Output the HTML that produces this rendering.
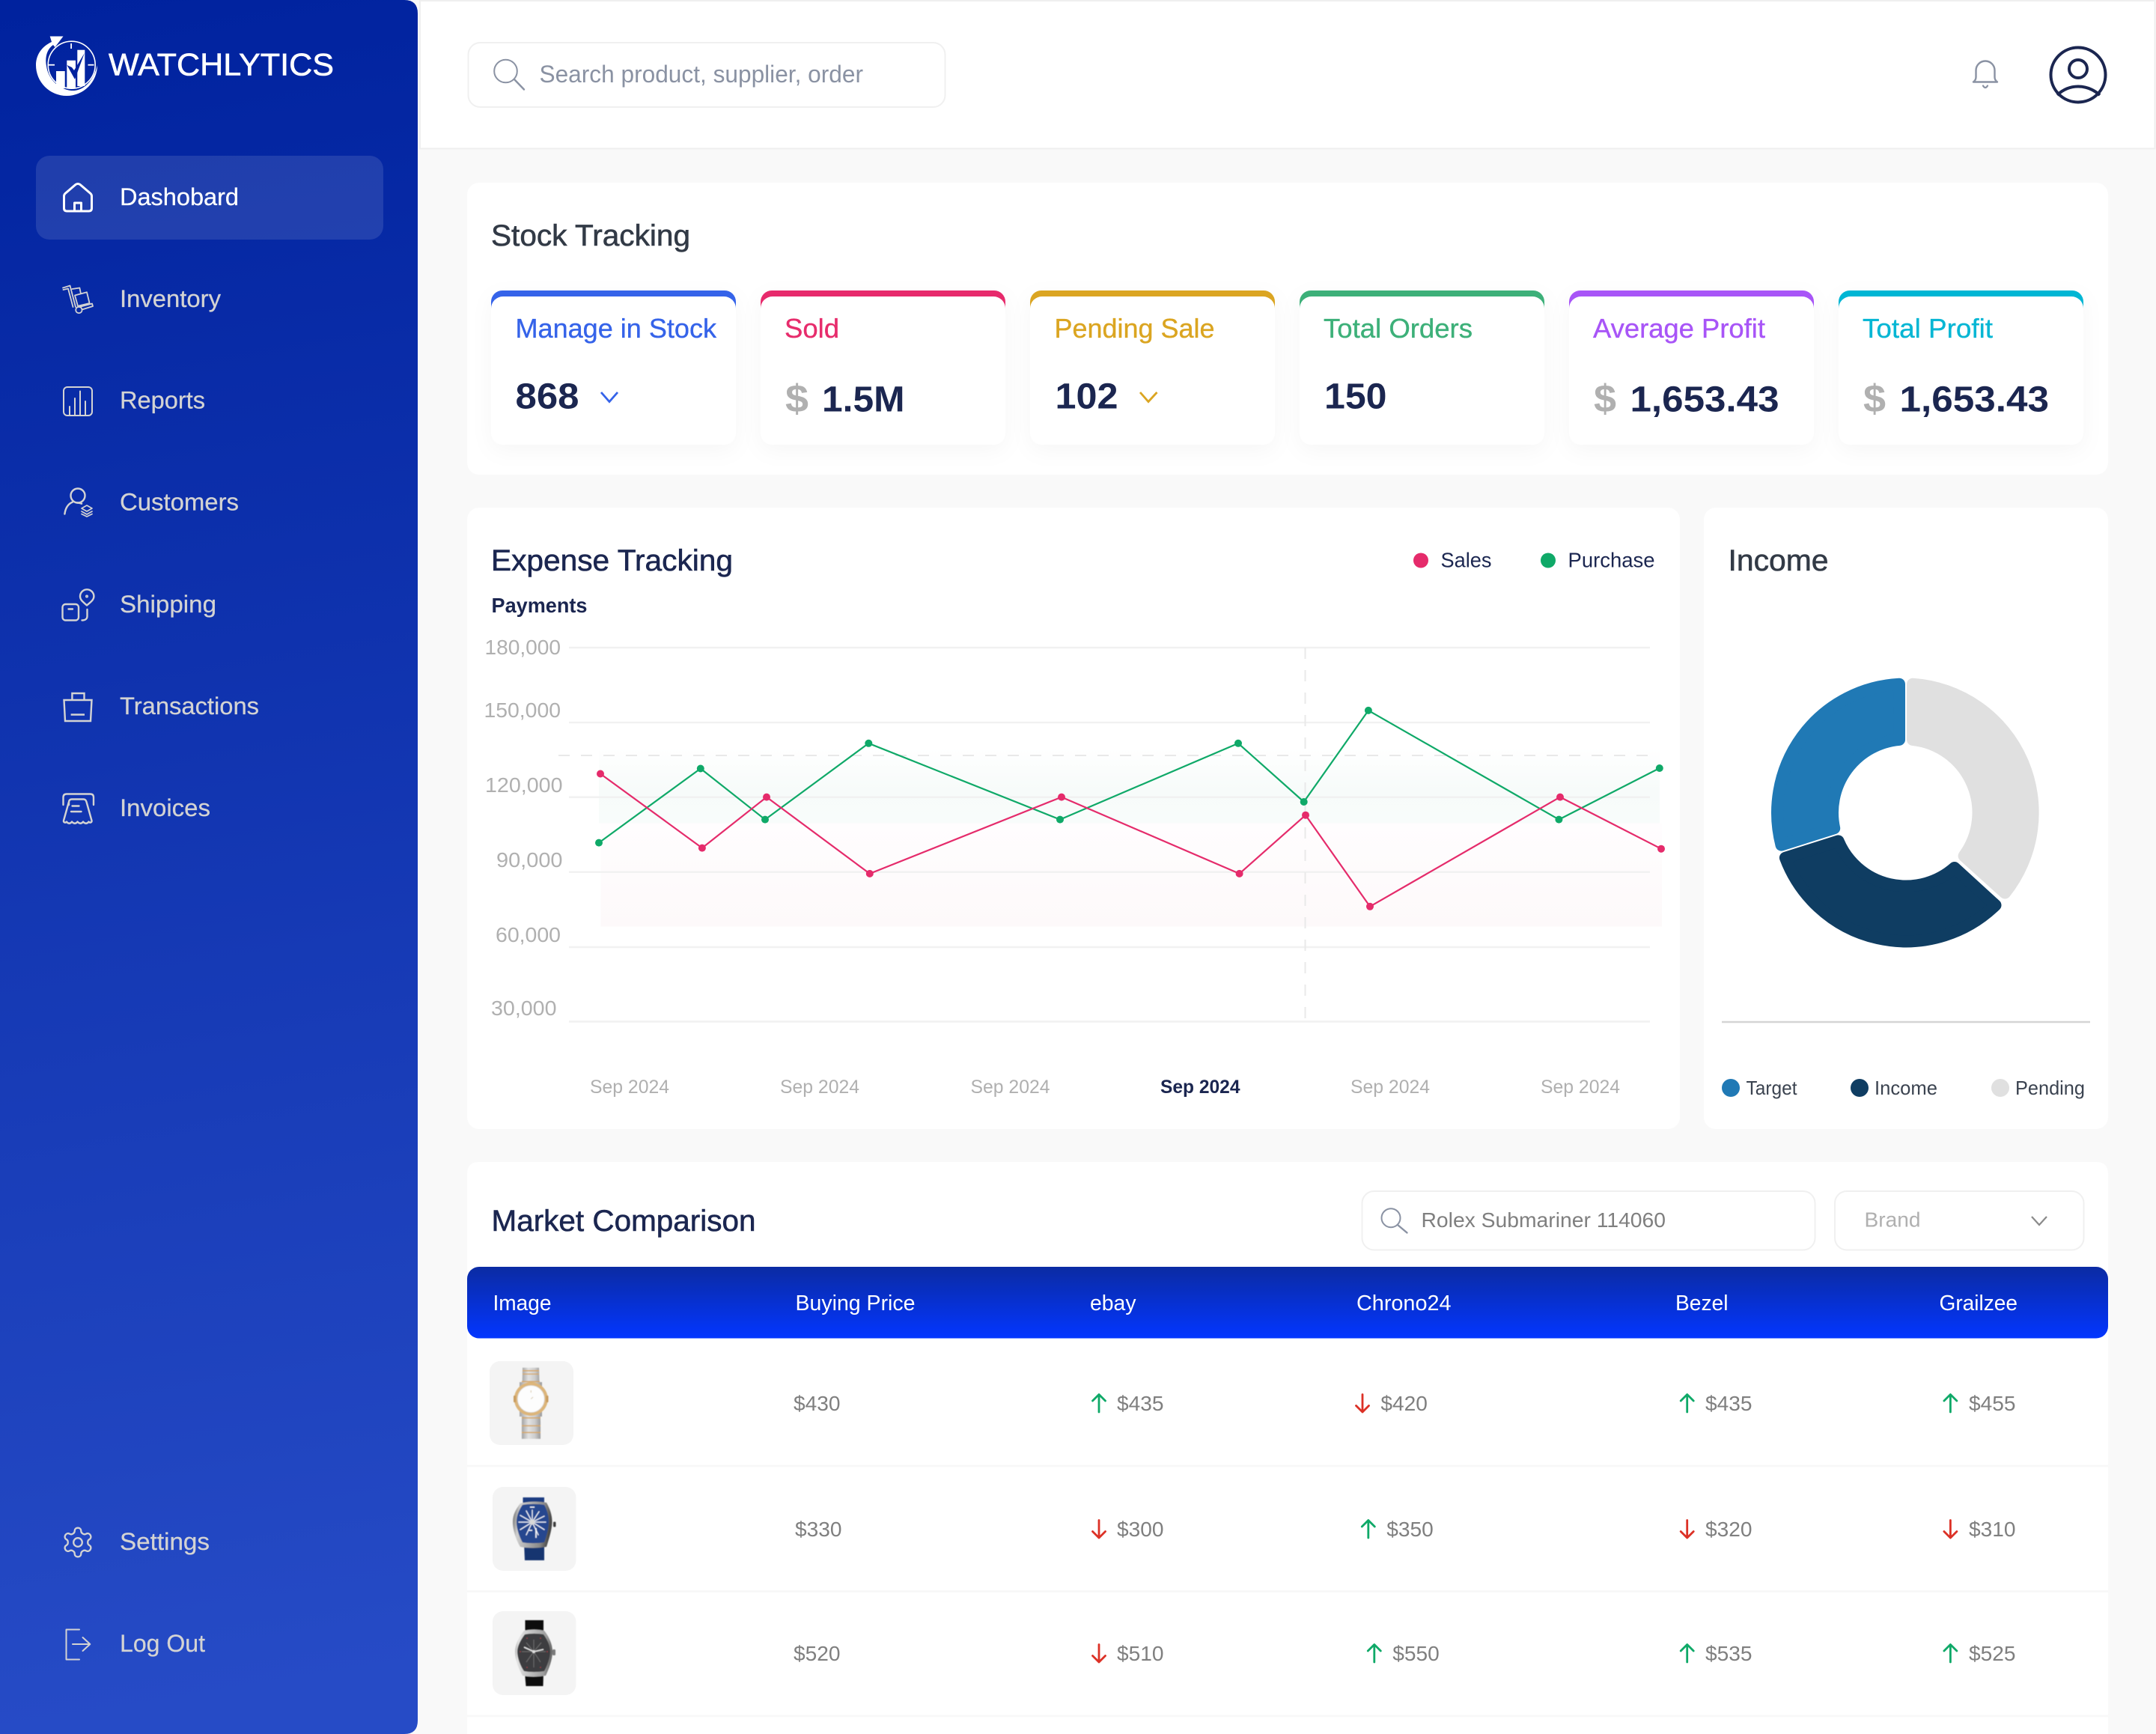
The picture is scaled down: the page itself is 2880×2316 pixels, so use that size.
<!DOCTYPE html>
<html lang="en">
<head>
<meta charset="utf-8">
<title>Watchlytics Dashboard</title>
<style>
html,body{margin:0;padding:0;background:#f9f9f9;width:2880px;height:2316px;overflow:hidden}
svg{display:block}
text{font-family:"Liberation Sans",sans-serif;white-space:pre}
.m{fill:currentColor;stroke:currentColor;stroke-width:.6}
.b{font-weight:700}
.nav{font-size:32px;fill:#d3d3d3;stroke:#d3d3d3;stroke-width:.25}
.ic{fill:none;stroke:#d3d3d3;stroke-width:2.4;stroke-linecap:round;stroke-linejoin:round}
.lab{font-size:36px;stroke-width:.35}
.num{font-size:48px;font-weight:700;fill:#1b2650}
.dol{font-size:52px;font-weight:700;fill:#b0b0b0}
.yl{font-size:28px;fill:#b0b0b0}
.xl{font-size:25px;fill:#b0b0b0}
.th{font-size:29px;fill:#fff}
.td{font-size:28px;fill:#7f7f7f}
.leg{font-size:26px;fill:#3b4350}
.up{fill:none;stroke:#0fa968;stroke-width:2.8;stroke-linecap:round;stroke-linejoin:round}
.dn{fill:none;stroke:#dc3126;stroke-width:2.8;stroke-linecap:round;stroke-linejoin:round}
.grid{stroke:#f1f1f1;stroke-width:2.4}
</style>
</head>
<body>
<svg xmlns="http://www.w3.org/2000/svg" width="2880" height="2316" viewBox="0 0 2880 2316">
<defs>
<linearGradient id="side" x1="0" y1="0" x2="0.04" y2="1"><stop offset="0" stop-color="#00229e"/><stop offset="1" stop-color="#264bc6"/></linearGradient>
<linearGradient id="head" x1="0" y1="0" x2="0" y2="1"><stop offset="0" stop-color="#0b2ba3"/><stop offset="1" stop-color="#0336ff"/></linearGradient>
<linearGradient id="gA" x1="0" y1="0" x2="0" y2="1"><stop offset="0" stop-color="#f6fbf9" stop-opacity="0"/><stop offset=".55" stop-color="#f7fbfa"/><stop offset="1" stop-color="#f8fcfb"/></linearGradient>
<linearGradient id="pA" x1="0" y1="0" x2="0" y2="1"><stop offset="0" stop-color="#fffdfe"/><stop offset="1" stop-color="#fdf9fa"/></linearGradient>
<linearGradient id="steel" x1="0" y1="0" x2="1" y2="0"><stop offset="0" stop-color="#a3a3a3"/><stop offset=".35" stop-color="#e2e2e2"/><stop offset=".7" stop-color="#cdcdcd"/><stop offset="1" stop-color="#9a9a9a"/></linearGradient>
<linearGradient id="steel2" x1="0" y1="0" x2="1" y2="0.15"><stop offset="0" stop-color="#5d5d5d"/><stop offset=".2" stop-color="#cfcfcf"/><stop offset=".8" stop-color="#8a8a8a"/><stop offset="1" stop-color="#4a4a4a"/></linearGradient>
<linearGradient id="steel3" x1="0" y1="0" x2="1" y2="0.1"><stop offset="0" stop-color="#9a9a9a"/><stop offset=".12" stop-color="#e2e2e2"/><stop offset=".85" stop-color="#9c9c9c"/><stop offset="1" stop-color="#6a6a6a"/></linearGradient>
<filter id="sh" x="-20%" y="-20%" width="140%" height="150%"><feDropShadow dx="0" dy="8" stdDeviation="14" flood-color="#000" flood-opacity=".035"/></filter>
<filter id="soft" x="-5%" y="-5%" width="110%" height="110%"><feGaussianBlur stdDeviation=".6"/></filter>
</defs>

<rect width="2880" height="2316" fill="#f9f9f9"/>

<!-- Sidebar -->
<path d="M0 0H540Q558 0 558 18V2298Q558 2316 540 2316H0Z" fill="url(#side)"/>
<!-- Logo -->
<g fill="#fff">
<path d="M130 87A41 41 0 0 1 89 128A41 41 0 0 1 48 87C48 73 56 62 69 56L66.7 48.5H84.5L73.5 63L71 60C62 66 60 78 62 88C64 105 78 119 95 121C112 122 125 108 130 87Z"/>
<rect x="75" y="95" width="11.7" height="23"/>
<rect x="89.3" y="80.7" width="11.7" height="37.6"/>
<rect x="103.3" y="66.7" width="10" height="48.3"/>
<rect x="94.2" y="58" width="1.8" height="7"/>
<rect x="65" y="85.8" width="8" height="1.8"/>
<rect x="117.5" y="85.8" width="8" height="1.8"/>
</g>
<circle cx="95.7" cy="86.7" r="31.5" fill="none" stroke="#fff" stroke-width="1.6"/>
<polygon points="89.5,87 96,90 99,94 112.8,71 100,106" fill="#00229e"/>
<text x="145" y="100.5" font-size="42" fill="#fff" stroke="#fff" stroke-width=".6" textLength="301" lengthAdjust="spacingAndGlyphs">WATCHLYTICS</text>

<rect x="48" y="208" width="464" height="112" rx="18" fill="#fff" fill-opacity=".115"/>
<path d="M85.5 262Q85.5 260 87 258.5L101 246.5Q104 244.5 107 246.5L121 258.5Q122.5 260 122.5 262V278Q122.5 282 118.5 282H89.5Q85.5 282 85.5 278ZM99.5 282V271H108.5V282" fill="none" stroke="#fff" stroke-width="3" stroke-linejoin="round"/>
<text x="160" y="274" font-size="32" fill="#fff" stroke="#fff" stroke-width=".25" textLength="159" lengthAdjust="spacingAndGlyphs">Dashobard</text>

<!-- Inventory -->
<g class="ic" style="stroke-width:1.8">
<path d="M84 384.5L93.5 381.5L101 410M84.5 387L91 385.5L97.5 410"/>
<circle cx="105.4" cy="414" r="4.2"/>
<path d="M96.4 386L106.4 384.5L107.8 391.5M100 394.5L116 390.3L119.6 405L104 408.7ZM109.6 413.5L124 409L123 405.5L106 410"/>
</g>
<text class="nav" x="160" y="410" textLength="135" lengthAdjust="spacingAndGlyphs">Inventory</text>

<!-- Reports -->
<g class="ic" style="stroke-width:2">
<rect x="85" y="517" width="38" height="38" rx="5"/>
<path d="M93 555V543M100 555V532M107 555V522.5M114 555V536"/>
</g>
<text class="nav" x="160" y="545.5" textLength="114" lengthAdjust="spacingAndGlyphs">Reports</text>

<!-- Customers -->
<g class="ic">
<circle cx="104" cy="662" r="9.5"/>
<path d="M86.4 686.5C87.5 678 91 673 97 670.5M103 671.5C105.5 671.7 107.5 672 109 672.7"/>
<path style="stroke-width:1.7" d="M116 675L123 679L116 683L109 679ZM109 683L116 687L123 683M109 686.5L116 690L123 686.5"/>
</g>
<text class="nav" x="160" y="681.5" textLength="159" lengthAdjust="spacingAndGlyphs">Customers</text>

<!-- Shipping -->
<g class="ic">
<rect x="83.5" y="807" width="21.5" height="21.5" rx="4"/>
<path d="M91.5 813.5H97"/>
<path d="M116 808.5C111.5 804.5 107 801.5 107 796.5A9.2 9.2 0 0 1 125.4 796.5C125.4 801.5 120.5 804.5 116 808.5Z"/>
<circle cx="116" cy="796.5" r=".8"/>
<path d="M116.5 814V823C116.5 826.5 114 828.5 109.5 828.5"/>
</g>
<text class="nav" x="160" y="818" textLength="129" lengthAdjust="spacingAndGlyphs">Shipping</text>

<!-- Transactions -->
<g class="ic" style="stroke-linejoin:miter;stroke-linecap:butt">
<path d="M96.4 936V926H112.5V936"/>
<path d="M85.5 935H122.5L121 963H87ZM94.6 954.5H113"/>
</g>
<text class="nav" x="160" y="954" textLength="186" lengthAdjust="spacingAndGlyphs">Transactions</text>

<!-- Invoices -->
<g class="ic">
<path d="M84.5 1075V1065Q84.5 1060.5 89 1060.5H120.5Q125 1060.5 125 1065V1075"/>
<path d="M92 1075V1071Q92.5 1067.5 96 1067.5H111.5Q114.5 1067.5 115.5 1071L122.5 1096C123 1098.5 120 1099.5 118.5 1097.5C116.5 1100.5 113.5 1100.5 111 1097.5C109 1100.5 106 1100.5 103.5 1097.5C101.5 1100.5 98.5 1100.5 96 1097.5C94 1100.5 91 1100.5 89 1097.5C87.5 1099.5 84.5 1098.5 85 1096L92 1071"/>
<path d="M96.5 1076.5H105.5M95 1084H108.5"/>
</g>
<text class="nav" x="160" y="1090" textLength="121" lengthAdjust="spacingAndGlyphs">Invoices</text>

<!-- Settings -->
<g transform="translate(104 2060) scale(1.93) translate(-12 -12)" fill="none" stroke="#d3d3d3" stroke-width="1.2" stroke-linecap="round" stroke-linejoin="round">
<path d="M12.22 2h-.44a2 2 0 0 0-2 2v.18a2 2 0 0 1-1 1.73l-.43.25a2 2 0 0 1-2 0l-.15-.08a2 2 0 0 0-2.73.73l-.22.38a2 2 0 0 0 .73 2.73l.15.1a2 2 0 0 1 1 1.72v.51a2 2 0 0 1-1 1.74l-.15.09a2 2 0 0 0-.73 2.73l.22.38a2 2 0 0 0 2.73.73l.15-.08a2 2 0 0 1 2 0l.43.25a2 2 0 0 1 1 1.73V20a2 2 0 0 0 2 2h.44a2 2 0 0 0 2-2v-.18a2 2 0 0 1 1-1.73l.43-.25a2 2 0 0 1 2 0l.15.08a2 2 0 0 0 2.73-.73l.22-.39a2 2 0 0 0-.73-2.73l-.15-.08a2 2 0 0 1-1-1.74v-.5a2 2 0 0 1 1-1.74l.15-.09a2 2 0 0 0 .73-2.73l-.22-.38a2 2 0 0 0-2.73-.73l-.15.08a2 2 0 0 1-2 0l-.43-.25a2 2 0 0 1-1-1.73V4a2 2 0 0 0-2-2z"/>
<circle cx="12" cy="12" r="3"/>
</g>
<text class="nav" x="160" y="2070" textLength="120" lengthAdjust="spacingAndGlyphs">Settings</text>

<!-- Log Out -->
<g class="ic" style="stroke-width:2">
<path d="M106 2176.5H88.5V2216.5H106"/>
<path d="M97 2196H120M110.5 2187L120.3 2196L110.5 2205"/>
</g>
<text class="nav" x="160" y="2206" textLength="114" lengthAdjust="spacingAndGlyphs">Log Out</text>

<!-- Top bar -->
<rect x="561" y="1" width="2317.5" height="197.5" fill="#fff" stroke="#efefef" stroke-width="2"/>
<rect x="625.5" y="57" width="637" height="86" rx="16" fill="#fff" stroke="#f0f0f0" stroke-width="2"/>
<circle cx="675.5" cy="95" r="15.3" fill="none" stroke="#8a92a3" stroke-width="2"/>
<path d="M687 106L700 119.5" stroke="#8a92a3" stroke-width="2.4" stroke-linecap="round"/>
<text x="720.5" y="110" font-size="32" fill="#8a92a3" textLength="432.5" lengthAdjust="spacingAndGlyphs">Search product, supplier, order</text>
<path d="M2636 109.5H2668Q2664.5 107 2664.5 103V94A12.5 12.5 0 0 0 2639.5 94V103Q2639.5 107 2636 109.5Z" fill="none" stroke="#8a92a3" stroke-width="2.4" stroke-linejoin="round"/>
<path d="M2649 114.5Q2652 119.5 2655 114.5" fill="none" stroke="#8a92a3" stroke-width="2.2" stroke-linecap="round"/>
<g fill="none" stroke="#1b2650" stroke-width="4">
<circle cx="2776" cy="100" r="36.5"/>
<circle cx="2776" cy="92" r="12"/>
<path d="M2748 127Q2760 115.5 2776 115.5Q2792 115.5 2805 127"/>
</g>

<!-- Stock Tracking card -->
<rect x="624" y="244" width="2192" height="390" rx="16" fill="#fff"/>
<text class="m" style="color:#323a46" x="656" y="328" font-size="40" textLength="266" lengthAdjust="spacingAndGlyphs">Stock Tracking</text>

<g filter="url(#sh)">
<rect x="656" y="388" width="327" height="60" rx="15" fill="#3563e9"/>
<rect x="656" y="396" width="327" height="198" rx="16" fill="#fff"/>
</g>
<g filter="url(#sh)">
<rect x="1016" y="388" width="327" height="60" rx="15" fill="#e72c6c"/>
<rect x="1016" y="396" width="327" height="198" rx="16" fill="#fff"/>
</g>
<g filter="url(#sh)">
<rect x="1376" y="388" width="327" height="60" rx="15" fill="#dba521"/>
<rect x="1376" y="396" width="327" height="198" rx="16" fill="#fff"/>
</g>
<g filter="url(#sh)">
<rect x="1736" y="388" width="327" height="60" rx="15" fill="#3db079"/>
<rect x="1736" y="396" width="327" height="198" rx="16" fill="#fff"/>
</g>
<g filter="url(#sh)">
<rect x="2096" y="388" width="327" height="60" rx="15" fill="#a855f7"/>
<rect x="2096" y="396" width="327" height="198" rx="16" fill="#fff"/>
</g>
<g filter="url(#sh)">
<rect x="2456" y="388" width="327" height="60" rx="15" fill="#06b6d4"/>
<rect x="2456" y="396" width="327" height="198" rx="16" fill="#fff"/>
</g>

<text class="lab" fill="#3563e9" stroke="#3563e9" x="688.5" y="451" textLength="268.5" lengthAdjust="spacingAndGlyphs">Manage in Stock</text>
<text class="lab" fill="#e72c6c" stroke="#e72c6c" x="1048" y="451" textLength="73" lengthAdjust="spacingAndGlyphs">Sold</text>
<text class="lab" fill="#dba521" stroke="#dba521" x="1408.500" y="451" textLength="214" lengthAdjust="spacingAndGlyphs">Pending Sale</text>
<text class="lab" fill="#3db079" stroke="#3db079" x="1768" y="451" textLength="199" lengthAdjust="spacingAndGlyphs">Total Orders</text>
<text class="lab" fill="#a855f7" stroke="#a855f7" x="2128" y="451" textLength="230" lengthAdjust="spacingAndGlyphs">Average Profit</text>
<text class="lab" fill="#06b6d4" stroke="#06b6d4" x="2488" y="451" textLength="174" lengthAdjust="spacingAndGlyphs">Total Profit</text>

<text class="num" x="688.5" y="545.5" textLength="85" lengthAdjust="spacingAndGlyphs">868</text>
<path d="M803 524L814 536.5L825 524" fill="none" stroke="#3563e9" stroke-width="2.8"/>
<text class="dol" x="1049" y="550" textLength="31" lengthAdjust="spacingAndGlyphs">$</text>
<text class="num" x="1098" y="549.5" textLength="110.5" lengthAdjust="spacingAndGlyphs">1.5M</text>
<text class="num" x="1409.5" y="545.5" textLength="84" lengthAdjust="spacingAndGlyphs">102</text>
<path d="M1523 524L1534 536.5L1545.5 524" fill="none" stroke="#dba521" stroke-width="2.8"/>
<text class="num" x="1769" y="545.5" textLength="83.5" lengthAdjust="spacingAndGlyphs">150</text>
<text class="dol" x="2129" y="550" textLength="30" lengthAdjust="spacingAndGlyphs">$</text>
<text class="num" x="2177.500" y="549.5" textLength="199" lengthAdjust="spacingAndGlyphs">1,653.43</text>
<text class="dol" x="2489" y="550" textLength="30" lengthAdjust="spacingAndGlyphs">$</text>
<text class="num" x="2537.5" y="549.5" textLength="199.5" lengthAdjust="spacingAndGlyphs">1,653.43</text>

<!-- Expense Tracking card -->
<rect x="624" y="678" width="1620" height="830" rx="16" fill="#fff"/>
<text class="m" style="color:#1b2650" x="656" y="762" font-size="40" textLength="323" lengthAdjust="spacingAndGlyphs">Expense Tracking</text>
<text class="b" x="656.5" y="818" font-size="28" fill="#1b2650" textLength="128" lengthAdjust="spacingAndGlyphs">Payments</text>
<circle cx="1898" cy="748.5" r="10" fill="#e52b6b"/>
<text x="1924.5" y="757.5" font-size="28" fill="#1b2650" textLength="68" lengthAdjust="spacingAndGlyphs">Sales</text>
<circle cx="2068" cy="748.5" r="10" fill="#0fa968"/>
<text x="2094.5" y="757.5" font-size="28" fill="#1b2650" textLength="116" lengthAdjust="spacingAndGlyphs">Purchase</text>

<rect x="800" y="1000" width="1417" height="99.5" fill="url(#gA)"/>
<rect x="802.5" y="1099.5" width="1417.5" height="138" fill="url(#pA)"/>

<g class="grid">
<line x1="760" y1="865" x2="2204" y2="865"/>
<line x1="760" y1="965" x2="2204" y2="965"/>
<line x1="760" y1="1064.7" x2="2204" y2="1064.7"/>
<line x1="760" y1="1164.7" x2="2204" y2="1164.7"/>
<line x1="760" y1="1265" x2="2204" y2="1265"/>
<line x1="760" y1="1364.5" x2="2204" y2="1364.5"/>
</g>
<line x1="746" y1="1009" x2="2204" y2="1009" stroke="#e9e9e9" stroke-width="2" stroke-dasharray="15 15"/>
<line x1="1743.5" y1="865" x2="1743.5" y2="1365" stroke="#e9e9e9" stroke-width="2" stroke-dasharray="15 15"/>

<text class="yl" x="647.5" y="874" textLength="101.5" lengthAdjust="spacingAndGlyphs">180,000</text>
<text class="yl" x="646.5" y="958" textLength="102.5" lengthAdjust="spacingAndGlyphs">150,000</text>
<text class="yl" x="648" y="1058" textLength="103.5" lengthAdjust="spacingAndGlyphs">120,000</text>
<text class="yl" x="663" y="1158" textLength="88.5" lengthAdjust="spacingAndGlyphs">90,000</text>
<text class="yl" x="662" y="1258" textLength="87" lengthAdjust="spacingAndGlyphs">60,000</text>
<text class="yl" x="656" y="1356" textLength="87.5" lengthAdjust="spacingAndGlyphs">30,000</text>

<polyline points="800,1125.6 935.8,1026.5 1022,1094.6 1160.3,992.8 1416,1094.6 1654,992.8 1741.7,1071 1827.9,948.9 2082.4,1094.6 2216.8,1026" fill="none" stroke="#0fa968" stroke-width="2.2" stroke-linejoin="round"/>
<polyline points="802,1033.5 937.9,1132.6 1024,1064.6 1161.8,1166.9 1418,1064.6 1655.6,1166.9 1744,1088.7 1830,1210.8 2084,1064.6 2219,1133.7" fill="none" stroke="#e52b6b" stroke-width="2.2" stroke-linejoin="round"/>
<g fill="#0fa968">
<circle cx="800" cy="1125.6" r="5"/><circle cx="935.8" cy="1026.5" r="5"/><circle cx="1022" cy="1094.6" r="5"/><circle cx="1160.3" cy="992.8" r="5"/><circle cx="1416" cy="1094.6" r="5"/><circle cx="1654" cy="992.8" r="5"/><circle cx="1741.7" cy="1071" r="5"/><circle cx="1827.9" cy="948.9" r="5"/><circle cx="2082.4" cy="1094.6" r="5"/><circle cx="2216.8" cy="1026" r="5"/>
</g>
<g fill="#e52b6b">
<circle cx="802" cy="1033.5" r="5"/><circle cx="937.9" cy="1132.6" r="5"/><circle cx="1024" cy="1064.6" r="5"/><circle cx="1161.8" cy="1166.9" r="5"/><circle cx="1418" cy="1064.6" r="5"/><circle cx="1655.6" cy="1166.9" r="5"/><circle cx="1744" cy="1088.7" r="5"/><circle cx="1830" cy="1210.8" r="5"/><circle cx="2084" cy="1064.6" r="5"/><circle cx="2219" cy="1133.7" r="5"/>
</g>

<text class="xl" x="788" y="1460" textLength="106" lengthAdjust="spacingAndGlyphs">Sep 2024</text>
<text class="xl" x="1042" y="1460" textLength="106" lengthAdjust="spacingAndGlyphs">Sep 2024</text>
<text class="xl" x="1296.5" y="1460" textLength="106" lengthAdjust="spacingAndGlyphs">Sep 2024</text>
<text class="xl b" style="fill:#1b2650" x="1550" y="1460" textLength="106.5" lengthAdjust="spacingAndGlyphs">Sep 2024</text>
<text class="xl" x="1804" y="1460" textLength="106" lengthAdjust="spacingAndGlyphs">Sep 2024</text>
<text class="xl" x="2058" y="1460" textLength="106" lengthAdjust="spacingAndGlyphs">Sep 2024</text>

<!-- Income card -->
<rect x="2276" y="678" width="540" height="830" rx="16" fill="#fff"/>
<text class="m" style="color:#323a46" x="2308.5" y="762" font-size="40" textLength="134" lengthAdjust="spacingAndGlyphs">Income</text>
<path d="M2555 913.74A172 172 0 0 1 2678.2 1192.5L2623.6 1143.2A98 98 0 0 0 2554.98 987.91Z" fill="#e0e0e0" stroke="#e0e0e0" stroke-width="16" stroke-linejoin="round"/>
<path d="M2665.5 1209A172 172 0 0 1 2384.9 1145.7L2455.62 1123.42A98 98 0 0 0 2610.8 1159Z" fill="#0f3d62" stroke="#0f3d62" stroke-width="16" stroke-linejoin="round"/>
<path d="M2379.5 1128.57A172 172 0 0 1 2537 913.74L2537.02 987.91A98 98 0 0 0 2450.22 1106.28Z" fill="#2079b5" stroke="#2079b5" stroke-width="16" stroke-linejoin="round"/>
<line x1="2300" y1="1365" x2="2792" y2="1365" stroke="#d5d5d5" stroke-width="2.4"/>
<circle cx="2312" cy="1453" r="12" fill="#2079b5"/>
<text class="leg" x="2332.5" y="1462" textLength="68" lengthAdjust="spacingAndGlyphs">Target</text>
<circle cx="2484" cy="1453" r="12" fill="#0f3d62"/>
<text class="leg" x="2504" y="1462" textLength="84" lengthAdjust="spacingAndGlyphs">Income</text>
<circle cx="2672" cy="1453" r="12" fill="#e0e0e0"/>
<text class="leg" x="2692" y="1462" textLength="93" lengthAdjust="spacingAndGlyphs">Pending</text>

<!-- Market Comparison card -->
<path d="M640 1552H2800Q2816 1552 2816 1568V2316H624V1568Q624 1552 640 1552Z" fill="#fff"/>
<text class="m" style="color:#1b2650" x="656.5" y="1644" font-size="40" textLength="353" lengthAdjust="spacingAndGlyphs">Market Comparison</text>
<rect x="1819.5" y="1591" width="605" height="78.5" rx="16" fill="#fff" stroke="#f0f0f0" stroke-width="2"/>
<circle cx="1858" cy="1626.7" r="12.5" fill="none" stroke="#8a92a3" stroke-width="2"/>
<path d="M1867 1636L1879.5 1646.5" stroke="#8a92a3" stroke-width="2.4" stroke-linecap="round"/>
<text x="1898.5" y="1639" font-size="28" fill="#7f7f7f" textLength="326.5" lengthAdjust="spacingAndGlyphs">Rolex Submariner 114060</text>
<rect x="2451" y="1591" width="332.5" height="78.5" rx="16" fill="#fff" stroke="#f0f0f0" stroke-width="2"/>
<text x="2490.5" y="1638.5" font-size="28" fill="#b0b0b0" textLength="75" lengthAdjust="spacingAndGlyphs">Brand</text>
<path d="M2714 1625L2724 1636L2734 1625" fill="none" stroke="#8a8a8a" stroke-width="2.2"/>

<rect x="624" y="1692" width="2192" height="95.5" rx="16" fill="url(#head)"/>
<text class="th" x="658.5" y="1750" textLength="78" lengthAdjust="spacingAndGlyphs">Image</text>
<text class="th" x="1062.5" y="1750" textLength="160" lengthAdjust="spacingAndGlyphs">Buying Price</text>
<text class="th" x="1456" y="1750" textLength="61.5" lengthAdjust="spacingAndGlyphs">ebay</text>
<text class="th" x="1812" y="1750" textLength="126.5" lengthAdjust="spacingAndGlyphs">Chrono24</text>
<text class="th" x="2238" y="1750" textLength="70.5" lengthAdjust="spacingAndGlyphs">Bezel</text>
<text class="th" x="2590.5" y="1750" textLength="104.5" lengthAdjust="spacingAndGlyphs">Grailzee</text>

<g stroke="#f8f8f8" stroke-width="3">
<line x1="624" y1="1958" x2="2816" y2="1958"/>
<line x1="624" y1="2125.5" x2="2816" y2="2125.5"/>
<line x1="624" y1="2292" x2="2816" y2="2292"/>
</g>

<!-- Thumbnails -->
<rect x="654" y="1818" width="112" height="112" rx="14" fill="#f4f4f4"/>
<rect x="658" y="1986" width="111.5" height="112" rx="14" fill="#f4f4f4"/>
<rect x="658" y="2152" width="111.5" height="112" rx="14" fill="#f4f4f4"/>

<!-- Watch 1 -->
<g filter="url(#soft)">
<path d="M698 1826.7H720L722 1900V1921.7H697V1900Z" fill="url(#steel)"/>
<rect x="694" y="1846" width="30" height="46" fill="url(#steel)"/>
<g fill="#d6a866">
<rect x="698" y="1830" width="22" height="1.6"/>
<rect x="698" y="1834.5" width="22" height="1.4"/>
<rect x="697" y="1844.5" width="24" height="1.6"/>
<rect x="697" y="1893" width="25" height="1.6"/>
<rect x="697" y="1903.5" width="25" height="1.6"/>
<rect x="697" y="1912.5" width="25" height="1.6"/>
</g>
<circle cx="709.3" cy="1868.5" r="22.5" fill="#dcb57a"/>
<rect x="686" y="1864" width="3" height="9" rx="1" fill="#c79a5d"/>
<rect x="729.5" y="1864" width="3" height="9" rx="1" fill="#c79a5d"/>
<circle cx="709.3" cy="1868.5" r="18" fill="#fdfdfd"/>
<circle cx="709.3" cy="1868.5" r="18" fill="none" stroke="#d8d8d8" stroke-width=".8"/>
<path d="M709.3 1857V1860M709.3 1868.5L712 1866" stroke="#c8b48a" stroke-width=".8"/>
</g>

<!-- Watch 2 -->
<g filter="url(#soft)">
<rect x="698.5" y="2000" width="28.5" height="12" fill="#1c3d82"/>
<path d="M700 2060H727L727 2084H701Z" fill="#17346f"/>
<path d="M727 2058C732 2046 737 2040 737 2033C737 2022 733 2013 729 2007L726 2009V2058Z" fill="#2444a0"/>
<path d="M695 2008C706 2005 720 2005 730 2007C735 2016 737.5 2024 737.5 2033C737.5 2043 733 2056 730 2066C719 2068 705 2068 695 2066C690 2058 685 2044 685 2033C685 2023 689 2016 695 2008Z" fill="url(#steel2)"/>
<path d="M698 2010C707 2008.5 719 2008.5 727 2010C731 2017 733 2025 733 2033C733 2041 730 2052 727 2060C718 2061.5 706 2061.5 698 2060C694 2053 690 2042 690 2033C690 2025 693 2017 698 2010Z" fill="#27478f"/>
<g stroke="#e9edf6" stroke-width="1.4" fill="none" stroke-linecap="round">
<path d="M711 2033L711 2017M711 2033L720 2019M711 2033L727 2025M711 2033L729 2033M711 2033L727 2043M711 2033L719 2050M711 2033L703 2050M711 2033L695 2043M711 2033L693 2033M711 2033L695 2024M711 2033L703 2018"/>
</g>
<path d="M708 2013H714M706.5 2044H711M716 2041V2054" stroke="#fff" stroke-width="1.6"/>
<circle cx="711" cy="2033" r="3.5" fill="#d8d8d8"/>
<rect x="739" y="2032.5" width="3.5" height="7" rx="1.5" fill="#3c3c3c"/>
</g>

<!-- Watch 3 -->
<g filter="url(#soft)">
<rect x="701.5" y="2164" width="24.5" height="18" fill="#111"/>
<path d="M701 2234H726L725.5 2252H702.5Z" fill="#0e0e0e"/>
<path d="M700 2178C708 2176 719 2176 727 2178C734 2187 738 2197 738 2206C738 2217 733 2229 729 2238C719 2240 706 2240 698 2238C693 2229 688 2217 688 2206C688 2197 693 2187 700 2178Z" fill="url(#steel3)"/>
<path d="M701 2183C709 2181.5 718 2181.5 726 2183C732 2191 735 2199 735 2206C735 2214 731 2225 727 2232C718 2233.5 708 2233.5 700 2232C695 2225 691 2214 691 2206C691 2199 695 2191 701 2183Z" fill="#3d3d3f"/>
<g stroke="#6a6a6c" stroke-width="1.1">
<path d="M713 2206L713 2190M713 2206L723 2194M713 2206L729 2206M713 2206L722 2220M713 2206L713 2227M713 2206L703 2220M713 2206L697 2206M713 2206L703 2194"/>
</g>
<path d="M713 2206L700 2200M713 2206L726 2203" stroke="#e6e6e6" stroke-width="1.6"/>
<circle cx="713" cy="2206" r="2" fill="#ddd"/>
<g fill="#b33a46"><circle cx="704" cy="2188" r=".8"/><circle cx="722" cy="2188" r=".8"/><circle cx="731" cy="2206" r=".8"/><circle cx="695" cy="2206" r=".8"/><circle cx="722" cy="2227" r=".8"/><circle cx="704" cy="2227" r=".8"/></g>
<rect x="738" y="2203" width="4" height="8" rx="1.5" fill="#7a7a7a"/>
</g>

<!-- Table row 1 -->
<text class="td" x="1060" y="1884" textLength="62.5" lengthAdjust="spacingAndGlyphs">$430</text>
<path class="up" d="M1468 1886V1863M1459.5 1871L1468 1862.5L1476.5 1871"/>
<text class="td" x="1492" y="1884" textLength="62.5" lengthAdjust="spacingAndGlyphs">$435</text>
<path class="dn" d="M1820 1862.5V1885.5M1811.5 1877.5L1820 1886L1828.5 1877.5"/>
<text class="td" x="1844.4" y="1884" textLength="62.5" lengthAdjust="spacingAndGlyphs">$420</text>
<path class="up" d="M2253.7 1886V1863M2245.2 1871L2253.7 1862.5L2262.2 1871"/>
<text class="td" x="2278" y="1884" textLength="62.5" lengthAdjust="spacingAndGlyphs">$435</text>
<path class="up" d="M2605.4 1886V1863M2596.9 1871L2605.4 1862.5L2613.9 1871"/>
<text class="td" x="2630" y="1884" textLength="62.5" lengthAdjust="spacingAndGlyphs">$455</text>

<!-- Table row 2 -->
<text class="td" x="1062" y="2052" textLength="62.5" lengthAdjust="spacingAndGlyphs">$330</text>
<path class="dn" d="M1468 2030.5V2053.5M1459.5 2045.5L1468 2054L1476.5 2045.5"/>
<text class="td" x="1492" y="2052" textLength="62.5" lengthAdjust="spacingAndGlyphs">$300</text>
<path class="up" d="M1827.8 2054V2031M1819.3 2039L1827.8 2030.5L1836.3 2039"/>
<text class="td" x="1852.3" y="2052" textLength="62.5" lengthAdjust="spacingAndGlyphs">$350</text>
<path class="dn" d="M2253.7 2030.5V2053.5M2245.2 2045.5L2253.7 2054L2262.2 2045.5"/>
<text class="td" x="2278" y="2052" textLength="62.5" lengthAdjust="spacingAndGlyphs">$320</text>
<path class="dn" d="M2605.4 2030.5V2053.5M2596.9 2045.5L2605.4 2054L2613.9 2045.5"/>
<text class="td" x="2630" y="2052" textLength="62.5" lengthAdjust="spacingAndGlyphs">$310</text>

<!-- Table row 3 -->
<text class="td" x="1060" y="2218" textLength="62.5" lengthAdjust="spacingAndGlyphs">$520</text>
<path class="dn" d="M1468 2196.5V2219.5M1459.5 2211.5L1468 2220L1476.5 2211.5"/>
<text class="td" x="1492" y="2218" textLength="62.5" lengthAdjust="spacingAndGlyphs">$510</text>
<path class="up" d="M1835.8 2220V2197M1827.3 2205L1835.8 2196.5L1844.3 2205"/>
<text class="td" x="1860.3" y="2218" textLength="62.5" lengthAdjust="spacingAndGlyphs">$550</text>
<path class="up" d="M2253.7 2220V2197M2245.2 2205L2253.7 2196.5L2262.2 2205"/>
<text class="td" x="2278" y="2218" textLength="62.5" lengthAdjust="spacingAndGlyphs">$535</text>
<path class="up" d="M2605.4 2220V2197M2596.9 2205L2605.4 2196.5L2613.9 2205"/>
<text class="td" x="2630" y="2218" textLength="62.5" lengthAdjust="spacingAndGlyphs">$525</text>
</svg>
</body>
</html>
